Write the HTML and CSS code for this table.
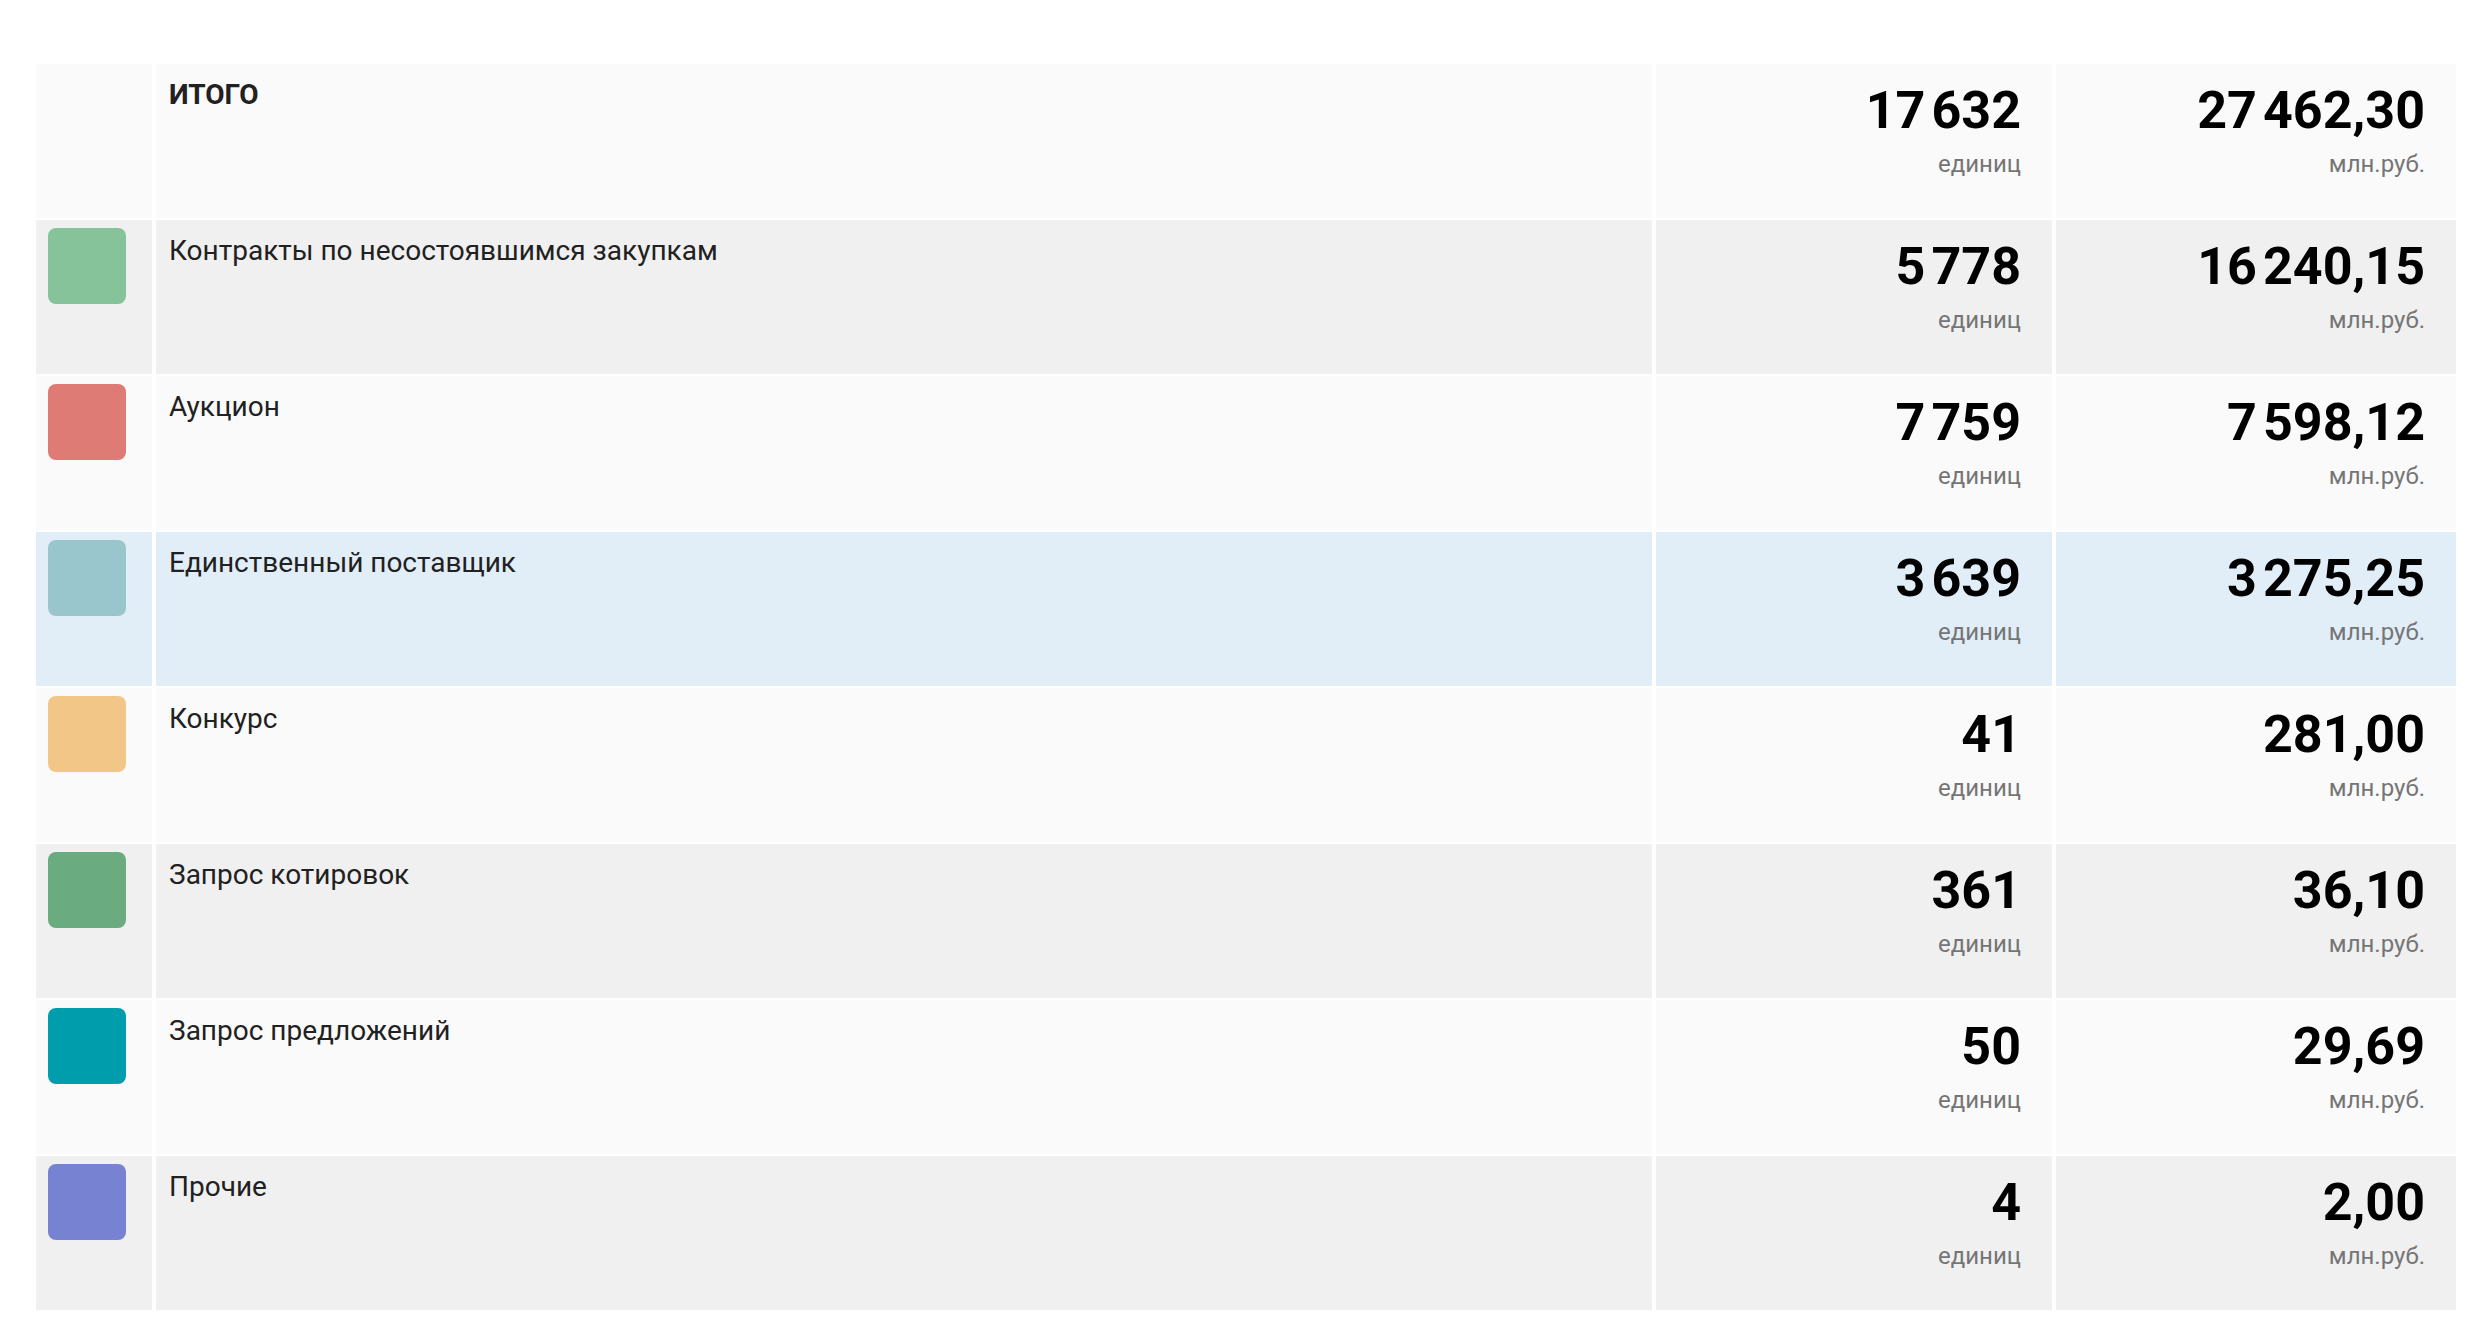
FILE: index.html
```html
<!DOCTYPE html>
<html lang="ru">
<head>
    <meta charset="UTF-8">
    <meta name="viewport" content="width=device-width, initial-scale=1.0">
    <title>Закупки по способам</title>
    <link rel="stylesheet" href="styles.css">
</head>
<body>
    <div class="container">
        <div class="summary">
            <div class="row row-light">
                <div class="cell cell-swatch"></div>
                <div class="cell cell-name total">итого</div>
                <div class="cell cell-value"><div class="value">17 632</div><div class="unit">единиц</div></div>
                <div class="cell cell-value"><div class="value">27 462,30</div><div class="unit">млн.руб.</div></div>
            </div>
            <div class="row row-dark">
                <div class="cell cell-swatch"><span class="swatch swatch-green"></span></div>
                <div class="cell cell-name">Контракты по несостоявшимся закупкам</div>
                <div class="cell cell-value"><div class="value">5 778</div><div class="unit">единиц</div></div>
                <div class="cell cell-value"><div class="value">16 240,15</div><div class="unit">млн.руб.</div></div>
            </div>
            <div class="row row-light">
                <div class="cell cell-swatch"><span class="swatch swatch-red"></span></div>
                <div class="cell cell-name">Аукцион</div>
                <div class="cell cell-value"><div class="value">7 759</div><div class="unit">единиц</div></div>
                <div class="cell cell-value"><div class="value">7 598,12</div><div class="unit">млн.руб.</div></div>
            </div>
            <div class="row row-active">
                <div class="cell cell-swatch"><span class="swatch swatch-blue"></span></div>
                <div class="cell cell-name">Единственный поставщик</div>
                <div class="cell cell-value"><div class="value">3 639</div><div class="unit">единиц</div></div>
                <div class="cell cell-value"><div class="value">3 275,25</div><div class="unit">млн.руб.</div></div>
            </div>
            <div class="row row-light">
                <div class="cell cell-swatch"><span class="swatch swatch-orange"></span></div>
                <div class="cell cell-name">Конкурс</div>
                <div class="cell cell-value"><div class="value">41</div><div class="unit">единиц</div></div>
                <div class="cell cell-value"><div class="value">281,00</div><div class="unit">млн.руб.</div></div>
            </div>
            <div class="row row-dark">
                <div class="cell cell-swatch"><span class="swatch swatch-darkgreen"></span></div>
                <div class="cell cell-name">Запрос котировок</div>
                <div class="cell cell-value"><div class="value">361</div><div class="unit">единиц</div></div>
                <div class="cell cell-value"><div class="value">36,10</div><div class="unit">млн.руб.</div></div>
            </div>
            <div class="row row-light">
                <div class="cell cell-swatch"><span class="swatch swatch-teal"></span></div>
                <div class="cell cell-name">Запрос предложений</div>
                <div class="cell cell-value"><div class="value">50</div><div class="unit">единиц</div></div>
                <div class="cell cell-value"><div class="value">29,69</div><div class="unit">млн.руб.</div></div>
            </div>
            <div class="row row-dark">
                <div class="cell cell-swatch"><span class="swatch swatch-purple"></span></div>
                <div class="cell cell-name">Прочие</div>
                <div class="cell cell-value"><div class="value">4</div><div class="unit">единиц</div></div>
                <div class="cell cell-value"><div class="value">2,00</div><div class="unit">млн.руб.</div></div>
            </div>
        </div>
    </div>
</body>
</html>
```

FILE: styles.css
```css
body {
    margin: 0;
    background: #ffffff;
    font-family: Roboto, "Noto Sans", sans-serif;
    color: #212121;
}
.container {
    padding: 64px 12px 26px 36px;
}
.summary {
    display: flex;
    flex-direction: column;
    gap: 2px;
}
.row {
    display: grid;
    grid-template-columns: 116px 1fr 396px 400px;
    column-gap: 4px;
    height: 154px;
}
.row-light .cell {
    background: #fafafa;
}
.row-dark .cell {
    background: #f0f0f0;
}
.row-active .cell {
    background: #e1eef8;
}
.cell-swatch {
    padding: 8px 12px;
}
.swatch {
    display: block;
    width: 78px;
    height: 76px;
    border-radius: 8px;
}
.swatch-green { background: #86c39a; }
.swatch-red { background: #de7b74; }
.swatch-blue { background: #99c5cd; }
.swatch-orange { background: #f2c686; }
.swatch-darkgreen { background: #6aab7f; }
.swatch-teal { background: #009dac; }
.swatch-purple { background: #7882d3; }

.cell-name {
    padding: 15px 13px 0;
    font-size: 28px;
    line-height: 32px;
}
.total {
    font-weight: 700;
    text-transform: uppercase;
}
.cell-value {
    padding: 17px 31px 0 0;
    text-align: right;
}
.value {
    font-size: 52px;
    line-height: 60px;
    font-weight: 700;
    color: #000000;
    word-spacing: -0.13em;
}
.unit {
    margin-top: 8px;
    font-size: 24px;
    line-height: 30px;
    color: #757575;
}
```
